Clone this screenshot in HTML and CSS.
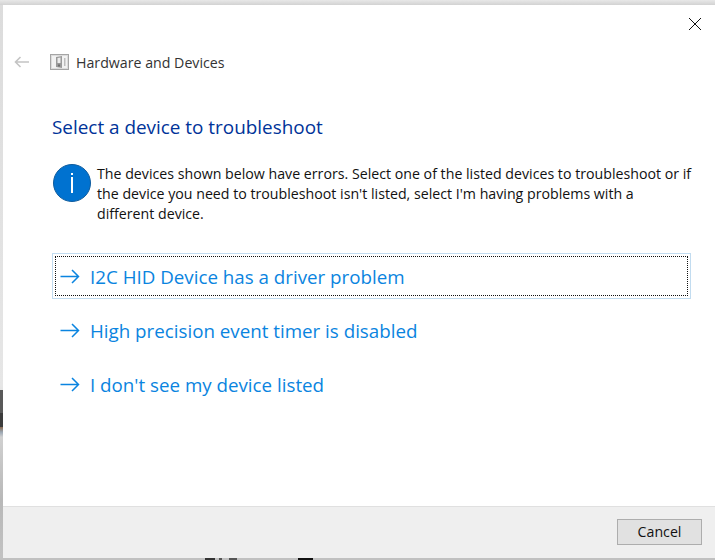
FILE: index.html
```html
<!DOCTYPE html>
<html lang="en">
<head>
<meta charset="utf-8">
<title>Hardware and Devices</title>
<link rel="stylesheet" href="styles.css">
</head>
<body>
<div class="desktop">
  <div class="backdrop-top"></div>
  <div class="dark-band"><span class="band-mid"></span><span class="band-low"></span><span class="band-light"></span></div>
  <div class="taskbar-bits">
    <span class="bit bit-a"></span>
    <span class="bit bit-c"></span>
    <span class="bit bit-d"></span>
    <span class="bit bit-b"></span>
  </div>
  <main class="window">
    <header class="titlebar">
      <svg class="close" width="14" height="14" viewBox="0 0 14 14"><path d="M1 1 L13 13 M13 1 L1 13" stroke="#111" stroke-width="1" fill="none"/></svg>
    </header>
    <nav class="navrow">
      <svg class="back" width="16" height="12" viewBox="0 0 16 12"><path d="M15 6 H1.5 M6.5 1 L1.5 6 L6.5 11" stroke="#c4c4c4" stroke-width="1.6" fill="none"/></svg>
      <svg class="app-icon" width="19" height="16" viewBox="0 0 19 16">
        <rect x="0.5" y="0.5" width="18" height="15" fill="#dcdcdc" stroke="#a5a5a5"/>
        <rect x="2" y="2" width="15" height="12" fill="#f2f2f2"/>
        <path d="M6 3 L12 2 V14 L6 13 Z" fill="#9a9a9a"/>
        <path d="M7.5 4 L10.5 3.5 V9 L7.5 9 Z" fill="#ececec"/>
        <rect x="8" y="10.5" width="2" height="2" fill="#6e6e6e"/>
        <rect x="14" y="4" width="1.5" height="8" fill="#bdbdbd"/>
      </svg>
      <span class="nav-title">Hardware and Devices</span>
    </nav>
    <section class="content">
      <h1 class="heading">Select a device to troubleshoot</h1>
      <div class="notice">
        <div class="info-icon"><span class="info-dot"></span><span class="info-stem"></span></div>
        <p class="notice-text">The devices shown below have errors. Select one of the listed devices to troubleshoot or if the device you need to troubleshoot isn't listed, select I'm having problems with a different device.</p>
      </div>
      <ul class="links">
        <li class="link link-focus"><span class="link-inner">
          <svg class="arrow" width="20" height="15" viewBox="0 0 20 15"><path d="M0.5 7.5 H18.5 M12 1 L18.5 7.5 L12 14" stroke="#0a84e0" stroke-width="1.5" fill="none"/></svg>
          <span>I2C HID Device has a driver problem</span></span></li>
        <li class="link"><span class="link-inner">
          <svg class="arrow" width="20" height="15" viewBox="0 0 20 15"><path d="M0.5 7.5 H18.5 M12 1 L18.5 7.5 L12 14" stroke="#0a84e0" stroke-width="1.5" fill="none"/></svg>
          <span>High precision event timer is disabled</span></span></li>
        <li class="link"><span class="link-inner">
          <svg class="arrow" width="20" height="15" viewBox="0 0 20 15"><path d="M0.5 7.5 H18.5 M12 1 L18.5 7.5 L12 14" stroke="#0a84e0" stroke-width="1.5" fill="none"/></svg>
          <span>I don't see my device listed</span></span></li>
      </ul>
    </section>
    <footer class="footer">
      <button class="cancel" type="button">Cancel</button>
    </footer>
  </main>
</div>
</body>
</html>
```
FILE: styles.css
```css
* { box-sizing: border-box; }
html, body { margin: 0; padding: 0; }
body { width: 715px; height: 560px; overflow: hidden; font-family: "Open Sans", "Noto Sans", sans-serif; }
.desktop {
  position: relative;
  width: 715px;
  height: 560px;
  padding: 5px 0 2px 3px;
  background: linear-gradient(to bottom, #dcdcdc 0, #e6e6e6 385px, #cfcfcf 440px, #b8b8b8 500px, #c2c2c2 560px);
  overflow: hidden;
}
.backdrop-top {
  position: absolute;
  left: 0; top: 0; right: 0; height: 5px;
  background: linear-gradient(to bottom, #e8e8e8, #d2d2d2);
}
.dark-band {
  position: absolute;
  left: 0; top: 390px; width: 3px; height: 47px;
  display: flex;
  flex-direction: column;
}
.band-mid { height: 23px; background: #595959; }
.band-low { height: 14px; background: #3c3c3c; }
.band-light { height: 10px; background: linear-gradient(to bottom, #8a6a50, #9aa6b2, #cfcfcf); }
.taskbar-bits { position: absolute; left: 0; bottom: 0; width: 100%; height: 2px; background: #c0c0c0; }
.bit { position: absolute; bottom: 0; height: 2px; background: #111; }
.bit-a { left: 205px; width: 10px; background: #333; }
.bit-c { left: 219px; width: 3px; background: #555; }
.bit-d { left: 229px; width: 8px; background: #555; }
.bit-b { left: 298px; width: 15px; }
.window {
  position: relative;
  display: flex;
  flex-direction: column;
  width: 712px;
  height: 553px;
  background: #fff;
}
.titlebar { display: flex; justify-content: flex-end; height: 29px; padding: 12px 13px 0 0; flex: none; }
.close { display: block; }
.navrow { display: flex; align-items: center; height: 16px; margin-top: 20px; padding-left: 11px; flex: none; }
.app-icon { margin-left: 20px; flex: none; }
.back { flex: none; }
.nav-title { margin-left: 7px; font-size: 14.2px; color: #333; white-space: nowrap; }
.content { flex: 1; padding: 0 0 0 49px; }
.heading { margin: 45px 0 0; font-size: 18.9px; font-weight: 400; line-height: 24px; color: #003399; }
.notice { display: flex; margin-top: 25px; }
.info-icon {
  position: relative;
  flex: none;
  width: 38px; height: 38px;
  margin: 0 0 0 1px;
  border-radius: 50%;
  background: #0072d0;
  border: 1px solid #0e5c9e;
}
.info-dot { position: absolute; left: 17px; top: 8px; width: 2px; height: 2px; background: #fff; }
.info-stem { position: absolute; left: 17px; top: 12px; width: 2px; height: 16px; background: #fff; }
.notice-text { margin: 0 0 0 6px; width: 597px; font-size: 14.2px; line-height: 20px; color: #111; }
.links { list-style: none; margin: 29px 0 0; padding: 0; width: 639px; }
.link { height: 46px; margin-bottom: 8px; padding: 2px; border: 1px solid transparent; color: #0a84e0; font-size: 18.75px; }
.link-focus { border-color: #c2dcf0; }
.link-inner { display: flex; align-items: center; height: 100%; padding: 1px 0 0 4px; border: 1px dotted transparent; white-space: nowrap; }
.link-focus .link-inner { border: 1px dotted #111; }
.arrow { flex: none; margin-right: 10px; }
.footer { display: flex; justify-content: flex-end; align-items: center; flex: none; height: 52px; padding: 0 13px 2px 0; background: #efefef; border-top: 1px solid #e0e0e0; }
.cancel {
  width: 85px; height: 26px;
  padding: 0;
  font-family: inherit; font-size: 14.2px; color: #111;
  background: #e1e1e1;
  border: 1px solid #adadad;
  border-radius: 0;
}
```
